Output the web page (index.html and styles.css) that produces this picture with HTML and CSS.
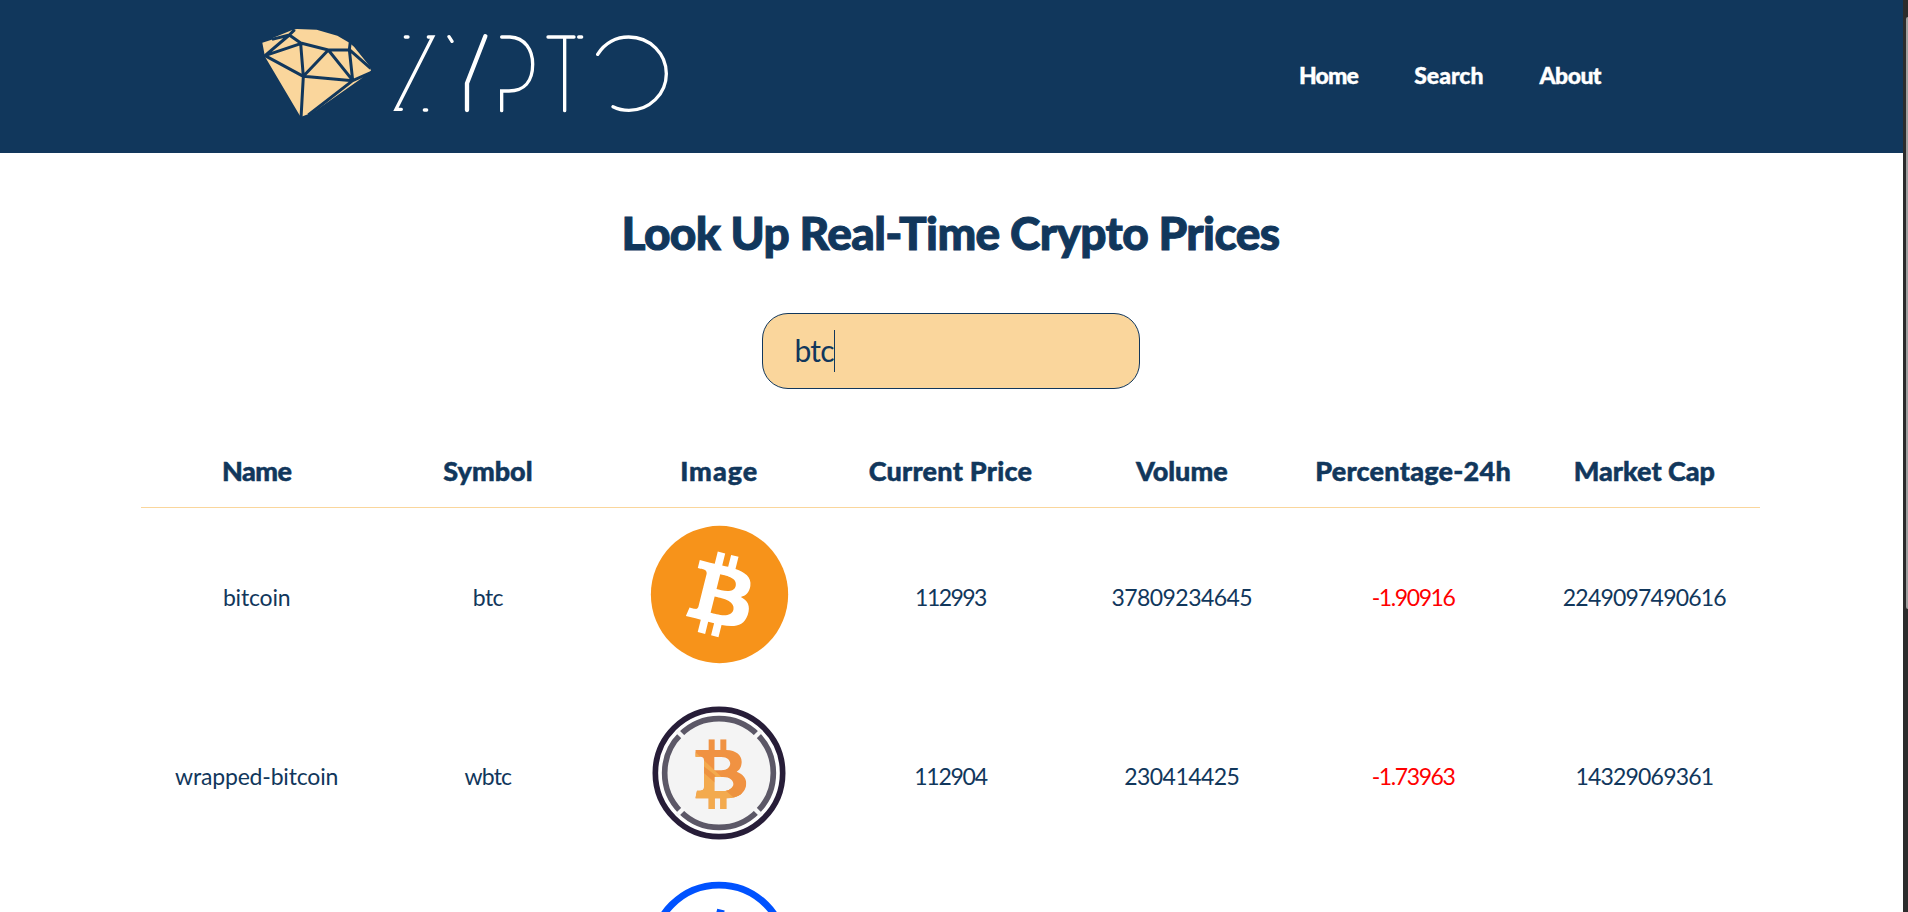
FILE: index.html
```html
<!DOCTYPE html>
<html lang="en">
<head>
<meta charset="utf-8">
<title>Zypto</title>
<link rel="stylesheet" href="styles.css">
</head>
<body>
<div class="page">
  <header class="header">
    <svg class="logo" viewBox="0 0 1290 345" role="img" aria-label="Zypto">
      <path class="gem" d="M37 83L65 74L100 65L68 69L125 46L140 42L200 44L262 62L298 83L312 95L358 152L363 168L332 192L190 292L152 306L45 125Z"/>
      <path class="facet" d="M134 44L118 60L66 73M118 60L152 84L235 105L298 104L301 80M118 60L45 122L152 86L160 184L235 105L308 196L298 104L362 160M45 122L160 184L308 197L366 171M160 184L153 310M308 197L175 300"/>
      <g class="wordmark" transform="translate(390 15)">
        <path d="M76 51H84M145 51H158L48 268H64M133 270H140M207 50L216 64M365 51H390C435 53 458 90 458 133C458 185 432 213 387 213H365V272M504 51H582M596 51H605M554 51V272M653 103C675 68 710 51 746 51C812 51 859 103 859 161C859 222 808 271 747 271Q721 271 699 260"/>
        <path class="thick" d="M316 49L261 190V270"/>
      </g>
    </svg>
    <nav class="nav">
      <a class="tight-2">Home</a><a>Search</a><a class="tight-1">About</a>
    </nav>
  </header>
  <main class="main">
    <h1 class="title">Look Up Real-Time Crypto Prices</h1>
    <div class="field"><span class="tight-2">btc</span><i class="caret"></i></div>
    <div class="table">
      <div class="row head">
        <span class="tight-1">Name</span><span>Symbol</span><span class="wide">Image</span><span class="loose">Current Price</span><span>Volume</span><span class="loose">Percentage-24h</span><span>Market Cap</span>
      </div>
      <div class="row">
        <span class="name">bitcoin</span><span class="tight-1">btc</span>
        <svg class="coin" viewBox="-1.6 -1.6 34.96 34.96"><circle cx="16" cy="16" r="16" fill="#f7931a"/><g fill="#fff"><path id="bitcoin" d="M23.189 14.02c.314-2.096-1.283-3.223-3.465-3.975l.708-2.84-1.728-.43-.69 2.765c-.454-.114-.92-.22-1.385-.326l.695-2.783L15.596 6l-.708 2.839c-.376-.086-.746-.17-1.104-.26l.002-.009-2.384-.595-.46 1.846s1.283.294 1.256.312c.7.175.826.638.805 1.006l-.806 3.235c.048.012.11.03.18.057l-.183-.045-1.13 4.532c-.086.212-.303.531-.793.41.018.025-1.256-.313-1.256-.313l-.858 1.978 2.25.561c.418.105.828.215 1.231.318l-.715 2.872 1.727.43.708-2.84c.472.127.93.245 1.378.357l-.706 2.828 1.728.43.715-2.866c2.948.558 5.164.333 6.097-2.333.752-2.146-.037-3.385-1.588-4.192 1.13-.26 1.98-1.003 2.207-2.538zm-3.95 5.538c-.533 2.147-4.148.986-5.32.695l.95-3.805c1.172.293 4.929.872 4.37 3.11zm.535-5.569c-.487 1.953-3.495.96-4.47.717l.86-3.45c.975.243 4.118.696 3.61 2.733z"/></g></svg>
        <span class="tight-4">112993</span><span class="tight-1">37809234645</span><span class="loss">-1.90916</span><span class="tight-2">2249097490616</span>
      </div>
      <div class="row">
        <span class="name">wrapped-bitcoin</span><span class="tight-2">wbtc</span>
        <svg class="coin" viewBox="11 12 450 450">
          <circle cx="236" cy="237" r="191" fill="#fff" stroke="#271d38" stroke-width="17"/>
          <circle cx="236" cy="237" r="160" fill="#f4f4f4"/>
          <circle cx="236" cy="237" r="163" fill="none" stroke="#5c5867" stroke-width="17"/>
          <path d="M110 111L132 133M340 341L362 363M362 111L340 133M132 341L110 363" stroke="#f7f7f7" stroke-width="13"/>
          <clipPath id="b"><path clip-rule="evenodd" d="M205 136H223V168H240V136H258V168C288 169 304 184 304 203C304 219 297 229 289 233C307 240 318 252 318 268C317 297 293 313 258 313V345H240V313H223V345H205V313H165L170 290H180Q191 290 191 280V199Q191 188 180 188H165V168H205ZM222 189V229H243C278 229 279 189 243 189ZM222 249V291H248C289 291 290 249 248 249Z"/></clipPath>
          <g clip-path="url(#b)"><path fill="#f09242" d="M150 120H330V360H150Z"/><path fill="#f3aa4e" d="M150 160L350 350H150Z"/><path fill="#ed9340" d="M190 217L225 244V267L190 236ZM240 250L310 302L285 315L222 260Z"/></g>
        </svg>
        <span class="tight-3">112904</span><span class="tight-1">230414425</span><span class="loss">-1.73963</span><span class="tight-2">14329069361</span>
      </div>
      <div class="row">
        <span></span><span></span>
        <svg class="coin" viewBox="-1.48 -1.38 34.96 34.96"><circle cx="16" cy="16" r="15.5" fill="#fff" stroke="#0052ff" stroke-width="1.6"/><use href="#bitcoin" fill="#0052ff"/></svg>
      </div>
    </div>
  </main>
</div>
<aside class="scrollbar"><i class="thumb"></i></aside>
</body>
</html>
```
FILE: styles.css
```css
* { box-sizing: border-box; }
body { margin: 0; display: flex; height: 912px; overflow: hidden; background: #fff; color: #11375c; font-family: Lato, "Open Sans", sans-serif; }
.page { width: 1903px; height: 912px; overflow: hidden; }
.header { height: 153px; background: #11375c; display: flex; justify-content: space-between; padding: 15px 302px 0 250px; }
.logo { width: 430px; height: 115px; }
.gem { fill: #fad69c; }
.facet { fill: none; stroke: #11375c; stroke-width: 9; stroke-linejoin: round; }
.wordmark { fill: none; stroke: #fff; stroke-width: 10; stroke-linecap: round; }
.thick { stroke-width: 13; }
.nav { display: flex; gap: 56px; padding-top: 46px; color: #fff; font-size: 23px; line-height: 28px; font-weight: 900; -webkit-text-stroke: .4px; }
.main { display: flex; flex-direction: column; align-items: center; padding-right: 2px; }
.title { margin: 50px 0 0; font-size: 46px; line-height: 60px; font-weight: 900; white-space: nowrap; letter-spacing: -.6px; -webkit-text-stroke: 1px; }
.field { width: 378px; height: 76px; margin-top: 50px; padding-left: 32px; border: 1px solid #11375c; border-radius: 26px; background: #fad69c; display: flex; align-items: center; font-size: 30px; }
.field span { margin-top: -2px; }
.caret { width: 1px; height: 42px; background: #11375c; }
.table { width: 1619px; margin-top: 46px; }
.row { display: grid; grid-template-columns: repeat(7, 1fr); align-items: center; justify-items: center; height: 179px; padding-bottom: 1px; font-size: 23px; white-space: nowrap; }
.head { height: 73px; border-bottom: 1px solid #fad69c; font-size: 27px; font-weight: 900; -webkit-text-stroke: .5px; }
.coin { width: 150px; height: 150px; margin-bottom: 7px; }
.name { letter-spacing: -.18px; }
.loose { letter-spacing: .25px; }
.wide { letter-spacing: 1px; }
.tight-1 { letter-spacing: -.55px; }
.tight-2 { letter-spacing: -.8px; }
.tight-3 { letter-spacing: -1.26px; }
.tight-4 { letter-spacing: -1.55px; }
.loss { color: #f00; letter-spacing: -1.4px; }
.scrollbar { width: 5px; height: 912px; background: #2c2c2c; padding: 17px 0 0 3px; }
.thumb { display: block; width: 2px; height: 592px; background: #9f9f9f; border-radius: 2px 0 0 2px; }
```
